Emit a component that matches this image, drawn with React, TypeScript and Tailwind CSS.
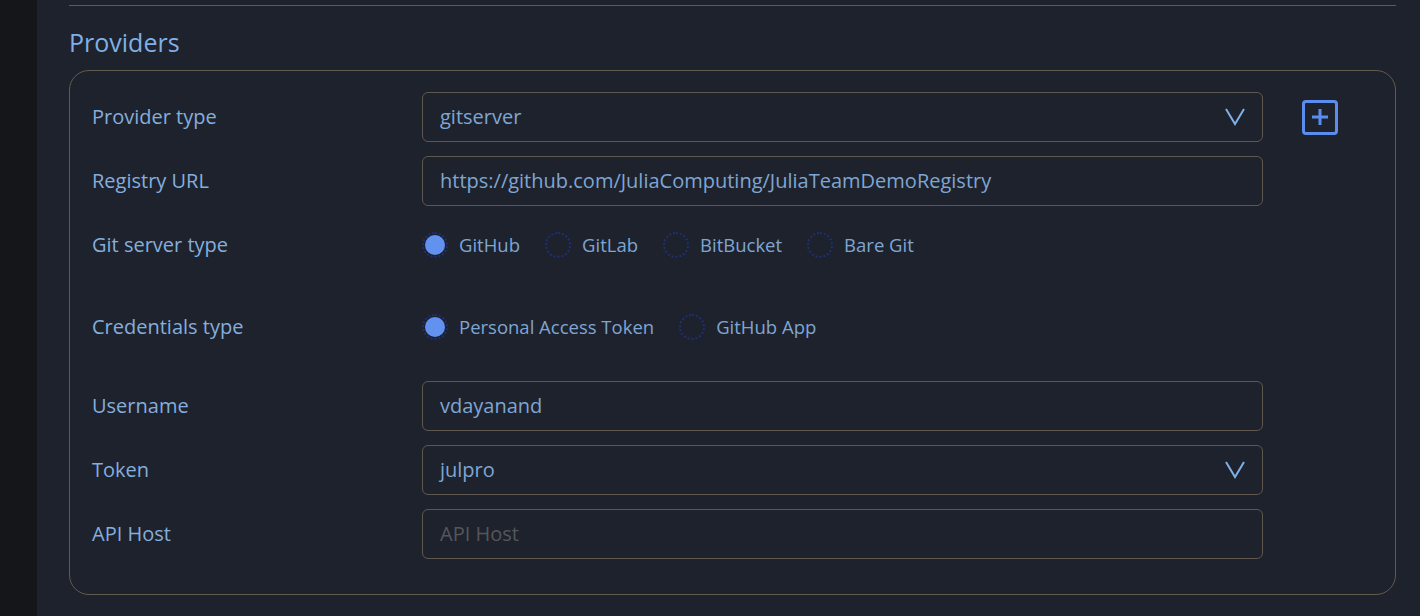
import React from 'react';

const font = { fontFamily: '"Open Sans", "Noto Sans", sans-serif' };

function Chevron() {
  return (
    <svg width="20" height="18" viewBox="0 0 20 18" className="shrink-0">
      <path d="M1 1 L10 16 L19 1" fill="none" stroke="#7fb0e6" strokeWidth="2" strokeLinejoin="miter" />
    </svg>
  );
}

function Row({ label, children, className = '' }: { label: string; children: React.ReactNode; className?: string }) {
  return (
    <div className={`flex items-center h-[50px] ${className}`}>
      <div className="w-[330px] shrink-0 text-[20px] text-[#84aede]">{label}</div>
      {children}
    </div>
  );
}

function Field({ value, placeholder, select }: { value?: string; placeholder?: string; select?: boolean }) {
  return (
    <div className="w-[841px] h-[50px] shrink-0 flex items-center justify-between pl-[17px] pr-[17px] rounded-[6px] border border-[#5e5850]">
      {value ? (
        <span className="text-[20px] text-[#7ea6d4]">{value}</span>
      ) : (
        <span className="text-[20px] text-[#55565a]">{placeholder}</span>
      )}
      {select && <Chevron />}
    </div>
  );
}

function Radio({ label, checked }: { label: string; checked?: boolean }) {
  return (
    <div className="flex items-center mr-[25px]">
      <div className="w-[26px] h-[26px] rounded-full border-2 border-dotted border-[#1f2f72] flex items-center justify-center">
        {checked && <div className="w-[20px] h-[20px] rounded-full bg-[#6292f0]" />}
      </div>
      <span className="ml-[11px] text-[18.5px] text-[#7ea6d4]">{label}</span>
    </div>
  );
}

export default function App() {
  return (
    <div className="flex w-[1420px] h-[616px] bg-[#1e222c] overflow-hidden" style={font}>
      <div className="w-[37px] shrink-0 bg-[#141619]" />
      <div className="flex-1 pl-[32px] pr-[24px]">
        <div className="mt-[5px] h-px bg-[#5e5a55]" />
        <h2 className="mt-[20px] text-[25px] leading-[32px] text-[#7fb0e6]">Providers</h2>
        <div className="mt-[12px] h-[525px] rounded-[20px] border border-[#625b50] pl-[22px] pt-[21px]">
          <Row label="Provider type">
            <Field value="gitserver" select />
            <button className="ml-[39px] w-[36px] h-[35px] rounded-[4px] border-[3px] border-[#5b8def] flex items-center justify-center">
              <svg width="18" height="18" viewBox="0 0 18 18">
                <path d="M9 1 V17 M1 9 H17" stroke="#5b8def" strokeWidth="3" />
              </svg>
            </button>
          </Row>
          <Row label="Registry URL" className="mt-[14px]">
            <Field value="https://github.com/JuliaComputing/JuliaTeamDemoRegistry" />
          </Row>
          <Row label="Git server type" className="mt-[14px]">
            <Radio label="GitHub" checked />
            <Radio label="GitLab" />
            <Radio label="BitBucket" />
            <Radio label="Bare Git" />
          </Row>
          <Row label="Credentials type" className="mt-[32px]">
            <Radio label="Personal Access Token" checked />
            <Radio label="GitHub App" />
          </Row>
          <Row label="Username" className="mt-[29px]">
            <Field value="vdayanand" />
          </Row>
          <Row label="Token" className="mt-[14px]">
            <Field value="julpro" select />
          </Row>
          <Row label="API Host" className="mt-[14px]">
            <Field placeholder="API Host" />
          </Row>
        </div>
      </div>
    </div>
  );
}
